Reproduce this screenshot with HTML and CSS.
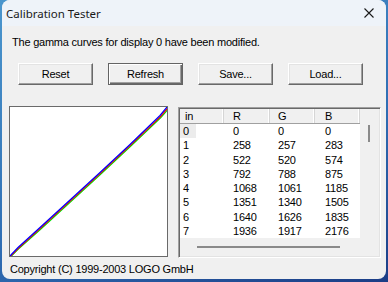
FILE: index.html
```html
<!DOCTYPE html>
<html lang="en">
<head>
    <meta charset="UTF-8">
    <title>Calibration Tester</title>
    <link rel="stylesheet" href="styles.css">
</head>
<body>
    <div class="janela">
        <div class="titulo">
            <span class="titulo-texto">Calibration Tester</span>
            <svg class="fechar" width="10" height="10" viewBox="0 0 10 10">
                <path d="M0.5 0.5 L9.5 9.5 M9.5 0.5 L0.5 9.5" stroke="#1a1a1a" stroke-width="1.1" fill="none"/>
            </svg>
        </div>

        <p class="mensagem">The gamma curves for display 0 have been modified.</p>

        <div class="botoes">
            <button class="bt">Reset</button>
            <button class="bt padrao">Refresh</button>
            <button class="bt">Save...</button>
            <button class="bt">Load...</button>
        </div>

        <div class="painel">
            <div class="grafico">
                <svg width="157" height="149" viewBox="0 0 157 149">
                    <polyline points="0,149 8,141 30,121.5 60,94 90,66.5 120,38.5 150,10 157,2" stroke="#00e000" stroke-width="1.2" fill="none" transform="translate(0.6,0.8)"/>
                    <polyline points="0,149 8,141 30,121 60,93.5 90,66 120,38 150,9.5 157,1" stroke="#ff0000" stroke-width="1.2" fill="none" transform="translate(0.3,0.4)"/>
                    <polyline points="0,149 8,140.5 30,120.5 60,93 90,65.5 120,37.5 150,8.5 157,0" stroke="#0000ff" stroke-width="1.2" fill="none"/>
                </svg>
            </div>

            <div class="lista">
                <div class="lista-topo">
                    <div class="tabela">
                        <div class="linha cabecalho">
                            <span>in</span><span>R</span><span>G</span><span>B</span>
                        </div>
                        <div class="linha"><span><i class="foco">0</i></span><span>0</span><span>0</span><span>0</span></div>
                        <div class="linha"><span>1</span><span>258</span><span>257</span><span>283</span></div>
                        <div class="linha"><span>2</span><span>522</span><span>520</span><span>574</span></div>
                        <div class="linha"><span>3</span><span>792</span><span>788</span><span>875</span></div>
                        <div class="linha"><span>4</span><span>1068</span><span>1061</span><span>1185</span></div>
                        <div class="linha"><span>5</span><span>1351</span><span>1340</span><span>1505</span></div>
                        <div class="linha"><span>6</span><span>1640</span><span>1626</span><span>1835</span></div>
                        <div class="linha"><span>7</span><span>1936</span><span>1917</span><span>2176</span></div>
                    </div>
                    <div class="rolagem-v"><div class="polegar-v"></div></div>
                </div>
                <div class="rolagem-h"><div class="polegar-h"></div></div>
            </div>
        </div>

        <p class="copyright">Copyright (C) 1999-2003 LOGO GmbH</p>
    </div>
</body>
</html>
```

FILE: styles.css
```css
body {
    margin: 0;
    padding: 0 2px;
    width: 384px;
    height: 282px;
    overflow: hidden;
    background: linear-gradient(160deg, #4b96cd 0%, #2f6db3 60%, #1b3d86 100%);
    font-family: "Liberation Sans", Arial, sans-serif;
    font-size: 11px;
    letter-spacing: -0.22px;
    color: #000;
}

.janela {
    width: 384px;
    height: 279px;
    background-color: #f0f0f0;
    border-radius: 8px;
    overflow: hidden;
    display: flex;
    flex-direction: column;
}

.titulo {
    height: 26px;
    flex: none;
    background-color: #eef3f9;
    display: flex;
    align-items: center;
    justify-content: space-between;
    padding: 0 12px 0 4px;
}

.titulo-texto {
    font-family: "Noto Sans", sans-serif;
    font-size: 11.5px;
    letter-spacing: 0;
    color: #1a1a1a;
}

.mensagem {
    margin: 9px 0 0 10px;
    line-height: 14px;
}

.botoes {
    display: flex;
    gap: 15px;
    margin: 14px 0 0 16px;
}

.bt {
    width: 75px;
    height: 22px;
    padding: 0;
    font-family: "Liberation Sans", Arial, sans-serif;
    font-size: 11px;
    letter-spacing: -0.22px;
    color: #000;
    background-color: #f0f0f0;
    border: 1px solid;
    border-color: #ffffff #696969 #696969 #ffffff;
    box-shadow: inset -1px -1px #a0a0a0, inset 1px 1px #e3e3e3;
}

/* botao padrao com moldura escura */
.bt.padrao {
    border-color: #646464;
    box-shadow: inset 1px 1px #ffffff, inset -1px -1px #696969, inset -2px -2px #a0a0a0;
}

.painel {
    display: flex;
    align-items: flex-start;
    gap: 10px;
    margin: 21px 0 0 7px;
}

.grafico {
    width: 157px;
    height: 149px;
    background-color: #fff;
    border: 1px solid #6a6a6a;
}

.grafico svg {
    display: block;
}

.lista {
    width: 199px;
    margin-top: 1px;
    border: 1px solid;
    border-color: #a0a0a0 #ffffff #ffffff #a0a0a0;
    box-shadow: inset 1px 1px #696969, inset -1px -1px #e3e3e3;
    padding: 1px;
}

.lista-topo {
    display: flex;
}

.tabela {
    width: 180px;
    background-color: #fff;
}

.linha {
    display: grid;
    grid-template-columns: 44px 46px 45px 45px;
    height: 14.3px;
    line-height: 14.3px;
}

.linha span:nth-child(1) { padding-left: 3px; }
.linha span:nth-child(2) { padding-left: 9px; }
.linha span:nth-child(3) { padding-left: 8px; }
.linha span:nth-child(4) { padding-left: 10px; }

.cabecalho {
    height: 14px;
    line-height: 14px;
    background-color: #f0f0f0;
    border-bottom: 1px solid #a0a0a0;
}

.cabecalho span {
    border-right: 1px solid #d6d6d6;
    box-shadow: inset -1px 0 #ffffff;
}

.cabecalho span:nth-child(1) { padding-left: 5px; }

.foco {
    font-style: normal;
    display: inline-block;
    width: 16px;
    margin-left: -3px;
    padding-left: 3px;
    box-sizing: border-box;
    background-color: #ececec;
}

.rolagem-v {
    width: 18px;
    background-color: #f0f0f0;
    position: relative;
}

.polegar-v {
    position: absolute;
    left: 8px;
    top: 16px;
    width: 2px;
    height: 17px;
    background-color: #8a8a8a;
}

.rolagem-h {
    height: 18px;
    background-color: #f0f0f0;
    position: relative;
}

.polegar-h {
    position: absolute;
    left: 17px;
    top: 8px;
    width: 143px;
    height: 2px;
    background-color: #8a8a8a;
}

.copyright {
    margin: 4px 0 0 8px;
    line-height: 14px;
}
```
